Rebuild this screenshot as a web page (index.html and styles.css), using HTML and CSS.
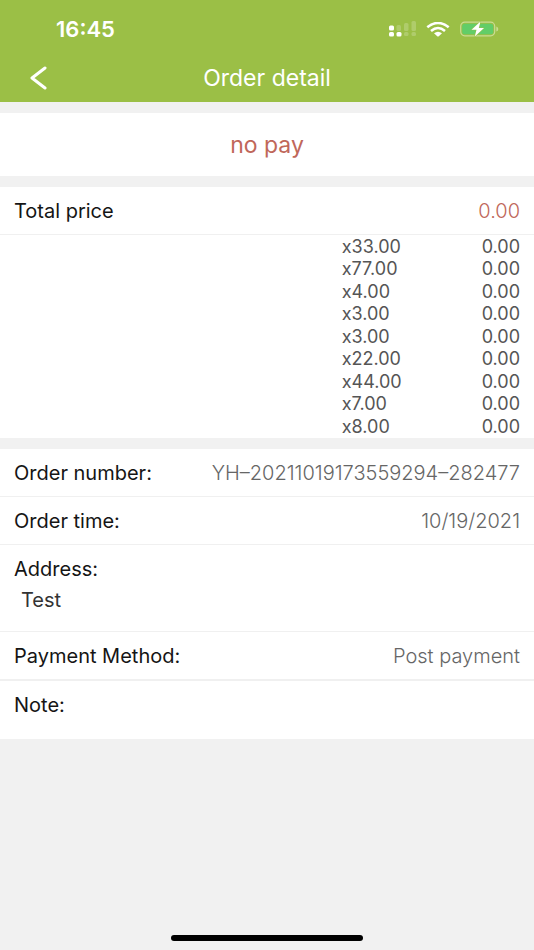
FILE: index.html
```html
<!DOCTYPE html>
<html lang="en">
<head>
<meta charset="utf-8">
<meta name="viewport" content="width=device-width, initial-scale=1">
<title>Order detail</title>
<link rel="stylesheet" href="styles.css">
</head>
<body>
<header class="header">
  <div class="status-bar">
    <time class="clock">16:45</time>
    <div class="indicators">
      <svg class="signal" width="27" height="16" viewBox="0 0 27 16" fill="#fff" aria-hidden="true">
        <g opacity=".2"><rect x="7.500" y="4" width="4.500" height="6" rx="1.500"/><rect x="15" y="2" width="4.500" height="8" rx="1.500"/><rect x="22.500" y="0" width="4.500" height="10" rx="1.500"/><rect x="15" y="11" width="4.500" height="4" rx="1.500"/><rect x="22.500" y="11" width="4.500" height="4" rx="1.500"/></g>
        <rect x="0" y="4.500" width="5" height="5" rx="1.500"/><rect x="0" y="11" width="5" height="4.500" rx="1.500"/><rect x="7.500" y="11" width="5" height="4.500" rx="1.500"/>
      </svg>
      <svg class="wifi" width="24" height="15" viewBox="0 0 24 15" aria-hidden="true">
        <g fill="none" stroke="#fff" stroke-width="2.600"><path d="M1.300 5.300Q12-3.300 22.700 5.300"/><path d="M5 8.900Q12 3.100 19 8.900"/></g>
        <path fill="#fff" d="M8 11.300Q12 8.300 16 11.300L12.800 14.300Q12 14.900 11.200 14.300Z"/>
      </svg>
      <svg class="battery" width="39" height="16" viewBox="0 0 39 16" aria-hidden="true">
        <rect x=".7" y="1.200" width="34" height="13.600" rx="4" fill="none" stroke="#c9dc94" stroke-width="1.200"/>
        <rect x="2.200" y="2.700" width="31" height="10.600" rx="2.500" fill="#62cd68"/>
        <path d="M36.300 5.500Q38.300 6 38.300 8T36.300 10.500Z" fill="#c9dc94"/>
        <path d="M20.500.5L11.500 8.700H16.500L14.800 15.500L24 7H18.800Z" fill="#fff" stroke="#9bbf46" stroke-width="1" paint-order="stroke"/>
      </svg>
    </div>
  </div>
  <nav class="nav">
    <button class="back" type="button" aria-label="Back">
      <svg width="18" height="24" viewBox="0 0 18 24" fill="none" stroke="#fff" stroke-width="3" stroke-linecap="round" stroke-linejoin="round" aria-hidden="true"><path d="M16 2L3 12L16 22"/></svg>
    </button>
    <h1 class="title">Order detail</h1>
  </nav>
</header>
<main class="content">
  <p class="card payment-state">no pay</p>
  <section class="card">
    <div class="row">
      <span class="label">Total price</span>
      <span class="value total">0.00</span>
    </div>
    <table class="items">
      <tbody>
        <tr><td>x33.00</td><td>0.00</td></tr>
        <tr><td>x77.00</td><td>0.00</td></tr>
        <tr><td>x4.00</td><td>0.00</td></tr>
        <tr><td>x3.00</td><td>0.00</td></tr>
        <tr><td>x3.00</td><td>0.00</td></tr>
        <tr><td>x22.00</td><td>0.00</td></tr>
        <tr><td>x44.00</td><td>0.00</td></tr>
        <tr><td>x7.00</td><td>0.00</td></tr>
        <tr><td>x8.00</td><td>0.00</td></tr>
      </tbody>
    </table>
  </section>
  <dl class="card details">
    <div class="row"><dt class="label">Order number:</dt><dd class="value">YH–20211019173559294–282477</dd></div>
    <div class="row"><dt class="label">Order time:</dt><dd class="value">10/19/2021</dd></div>
    <div class="row address"><dt class="label">Address:</dt><dd class="place">Test</dd></div>
    <div class="row payment"><dt class="label">Payment Method:</dt><dd class="value">Post payment</dd></div>
    <div class="row note"><dt class="label">Note:</dt><dd></dd></div>
  </dl>
</main>
<div class="home-indicator"></div>
</body>
</html>
```
FILE: styles.css
```css
* { box-sizing: border-box; }

body {
  display: flex;
  flex-direction: column;
  min-height: 100vh;
  margin: 0;
  background: #f1f1f1;
  color: #151515;
  font-family: Inter, "Liberation Sans", sans-serif;
  font-size: 20px;
  line-height: 24px;
}

.header {
  background: #9bbf46;
  color: #fff;
}

.status-bar {
  display: flex;
  align-items: center;
  justify-content: space-between;
  padding: 17px 35px 0 56px;
}

.clock {
  font-size: 22px;
  font-weight: 600;
}

.indicators {
  display: flex;
  align-items: center;
  gap: 10px;
}

.nav {
  display: grid;
  grid-template-columns: 60px 1fr 60px;
  align-items: center;
  padding: 25px 0 12px;
}

.back {
  display: flex;
  justify-content: flex-end;
  padding: 0 13px 0 0;
  border: 0;
  background: none;
}

.title {
  margin: 0;
  font-size: 23px;
  font-weight: 400;
  text-align: center;
}

.content {
  display: grid;
  gap: 11px;
  padding-top: 11px;
}

.card {
  margin: 0;
  background: #fff;
}

.payment-state {
  padding: 20px 14px 19px;
  color: #c0675a;
  font-size: 23px;
  text-align: center;
}

.row {
  display: flex;
  justify-content: space-between;
  padding: 12px 14px 11px;
  border-bottom: 1px solid #f0f0f0;
}

.value {
  margin: 0;
  color: #666;
  font-weight: 300;
}

.total { color: #c0675a; }

.items {
  width: 100%;
  border-collapse: collapse;
  color: #555;
  font-size: 18px;
  line-height: 22px;
}

.items tr:nth-child(odd) { line-height: 23px; }

.items td {
  padding: 0;
  text-align: right;
}

.items td:first-child {
  width: 64%;
  padding-left: 64%;
  text-align: left;
}

.items td:last-child { padding-right: 14px; }

.details .address {
  flex-direction: column;
  justify-content: flex-start;
  gap: 7px;
  padding-bottom: 19px;
}

.place {
  margin: 0 7px;
  color: #333;
}

.details .payment { border-bottom-width: 2px; }

.details .note {
  padding-bottom: 22px;
  border-bottom: 0;
}

.home-indicator {
  width: 36%;
  height: 6px;
  margin: auto auto 9px;
  border-radius: 3px;
  background: #000;
}
```
